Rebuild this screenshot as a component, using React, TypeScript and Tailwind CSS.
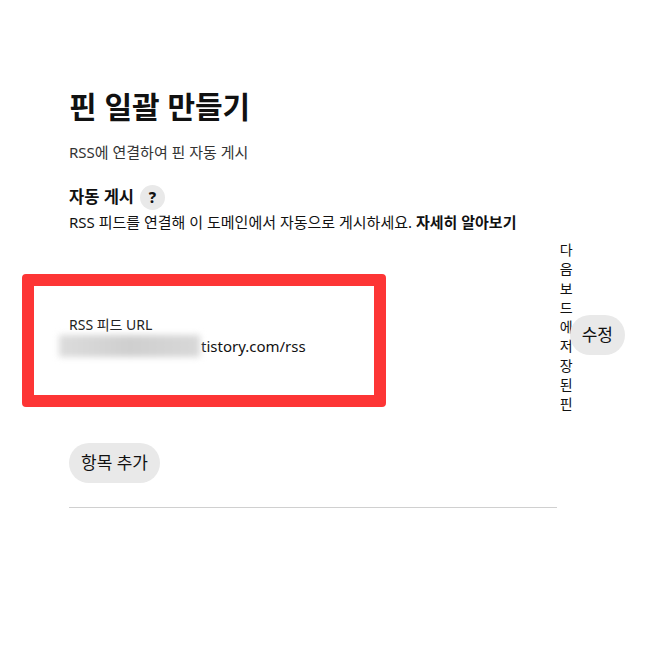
export default function App() {
  return (
    <div
      className="relative min-h-[645px] w-[645px] bg-white pl-[69px] pt-[88px] text-[#111111]"
      style={{ fontFamily: '"Noto Sans", "Noto Sans CJK KR", sans-serif' }}
    >
      <h1 className="text-[30px] font-bold leading-[38px]">핀 일괄 만들기</h1>
      <p className="mt-[16px] text-[15px] leading-[20px] text-[#333333]">RSS에 연결하여 핀 자동 게시</p>

      <div className="mt-[23px] flex h-[24px] items-center gap-[6px]">
        <h2 className="text-[16.5px] font-bold leading-[24px]">자동 게시</h2>
        <span className="flex h-[25px] w-[25px] items-center justify-center rounded-full bg-[#e9e9e9] text-[15px] font-extrabold text-[#111111]">
          ?
        </span>
      </div>
      <p className="mt-[3px] text-[15px] leading-[20px]">
        RSS 피드를 연결해 이 도메인에서 자동으로 게시하세요. <span className="font-bold">자세히 알아보기</span>
      </p>

      <div className="mt-[8px] flex w-[556px] items-start">
        <div className="mt-[75px] flex-1">
          <div className="text-[14px] leading-[20px] text-[#222222]">RSS 피드 URL</div>
          <div className="flex items-center text-[15px] leading-[22px]">
            <span className="-ml-[10px] mr-[1px] inline-block h-[22px] w-[141px] bg-gradient-to-r from-[#dcdcdc] via-[#cfcfcf] to-[#d8d8d8] blur-[3px]" />
            <span>tistory.com/rss</span>
          </div>
        </div>
        <div className="w-[10px] break-all text-[14px] leading-[19.25px]">다음보드에저장된핀</div>
        <button className="mt-[75px] h-[40px] rounded-full bg-[#e9e9e9] px-[12px] text-[17px] leading-[40px]">
          수정
        </button>
      </div>

      <button className="mt-[30px] h-[40px] rounded-full bg-[#e9e9e9] px-[12px] text-[17px] leading-[40px]">
        항목 추가
      </button>

      <div className="mt-[24px] w-[488px] border-t border-[#d0d0d0]" />

      <div className="pointer-events-none absolute left-[22px] top-[274px] h-[133px] w-[364px] rounded-[4px] border-[12px] border-[#fd3535]" />
    </div>
  );
}
